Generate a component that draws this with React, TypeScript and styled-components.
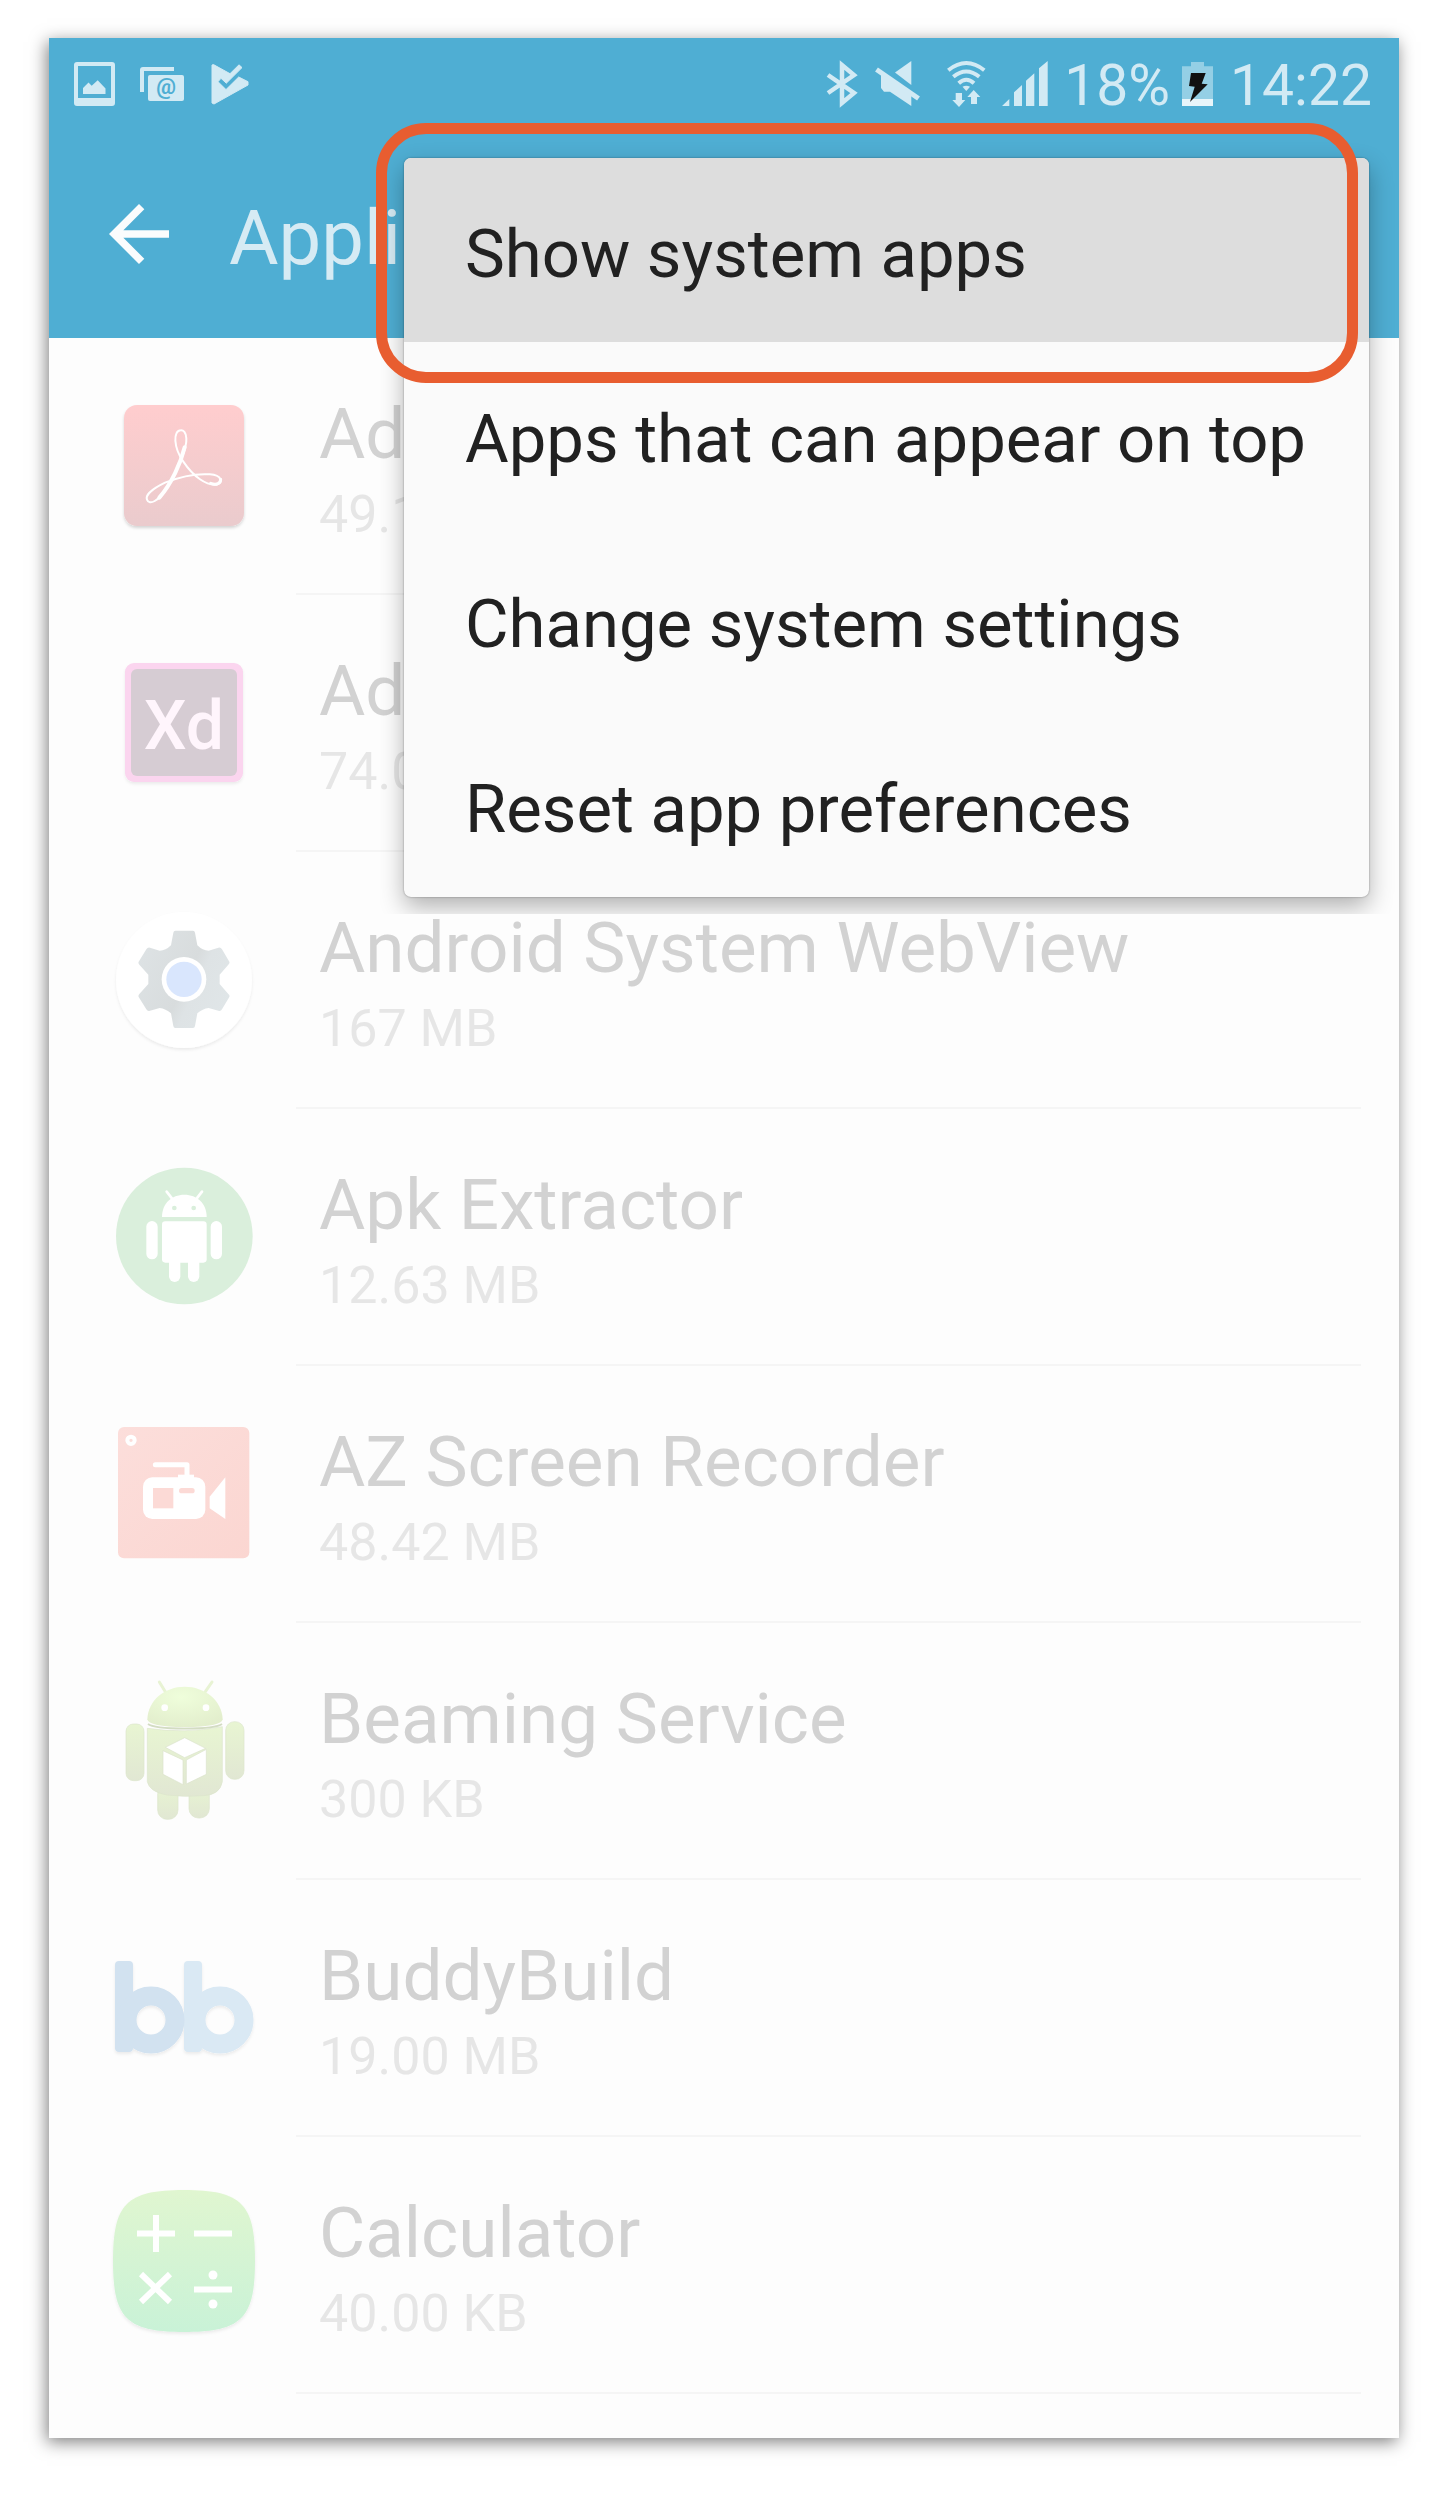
import React from 'react';
import styled, { createGlobalStyle } from 'styled-components';

const GlobalStyle = createGlobalStyle`
  *, *::before, *::after { box-sizing: border-box; }
  body {
    margin: 0;
    background: #fff;
    font-family: Roboto, "Liberation Sans", sans-serif;
  }
  h1, p, ul { margin: 0; padding: 0; font-weight: 400; }
  ul { list-style: none; }
  button { font: inherit; border: 0; background: none; padding: 0; cursor: pointer; }
`;

const Page = styled.main`
  padding: 38px 49px 59px;
`;

const Screen = styled.div`
  position: relative;
  padding-bottom: 44px;
  background: #fdfdfd;
  box-shadow: -2px 4px 16px rgba(0, 0, 0, 0.5);
`;

const Header = styled.header`
  background: #4faed3;
`;

const StatusBar = styled.div`
  display: flex;
  align-items: center;
  justify-content: space-between;
  height: 96px;
  padding: 0 27px 0 24px;
  color: #d2eaf4;
`;

const StatusGroup = styled.div<{ $gap: number }>`
  display: flex;
  align-items: center;
  gap: ${(p) => p.$gap}px;
  white-space: nowrap;
`;

const StatusText = styled.span`
  font-size: 57px;
  line-height: 64px;
`;

const StatusSvg = styled.svg`
  display: block;
  flex: none;
  height: 46px;
  overflow: visible;
  margin-bottom: 4px;
`;

const Toolbar = styled.div`
  display: flex;
  align-items: center;
  gap: 45px;
  height: 204px;
  padding: 0 24px 4px 45px;
`;

const BackButton = styled.button`
  display: flex;
  color: #fafcfd;
`;

const Title = styled.h1`
  padding-top: 8px;
  font-size: 76px;
  line-height: 88px;
  color: #d6ebf4;
  white-space: nowrap;
`;

const Row = styled.li`
  display: flex;
  align-items: stretch;
  gap: 40px;
  padding: 0 38px 0 63px;
`;

const AppIcon = styled.svg`
  display: block;
  flex: none;
  align-self: center;
  width: 144px;
  height: 144px;
  margin-bottom: 3px;
  overflow: visible;
`;

const RowBody = styled.div`
  display: flex;
  flex: 1;
  flex-direction: column;
  justify-content: center;
  gap: 8px;
  min-width: 0;
  height: 257px;
  padding: 6px 0 0 23px;
  border-bottom: 2px solid #f5f5f5;
  white-space: nowrap;
`;

const AppName = styled.p`
  font-size: 71px;
  line-height: 84px;
  color: #d2d2d2;
`;

const AppSize = styled.p`
  font-size: 52px;
  line-height: 62px;
  color: #e6e6e6;
`;

const Menu = styled.div`
  position: absolute;
  top: 120px;
  right: 30px;
  display: flex;
  flex-direction: column;
  gap: 1px;
  border-radius: 7px;
  background: #fafafa;

  &::before {
    content: '';
    position: absolute;
    inset: 0;
    z-index: -1;
    border-radius: 7px;
    box-shadow: 0 0 2px rgba(0, 0, 0, 0.4), 0 10px 24px rgba(0, 0, 0, 0.3);
    clip-path: inset(-24px -30px -17px -24px);
  }
`;

const MenuLayer = styled.div`
  position: absolute;
  inset: 0;
  z-index: 1;
  pointer-events: none;

  > * { pointer-events: auto; z-index: 0; }
`;

const MenuItem = styled.button<{ $active?: boolean }>`
  position: relative;
  height: 184px;
  padding: 8px 63px 0 61px;
  border-radius: ${(p) => (p.$active ? '7px 7px 0 0' : '0')};
  background: ${(p) => (p.$active ? '#ddd' : 'transparent')};
  color: #212121;
  font-size: 67px;
  line-height: 80px;
  text-align: left;
  white-space: nowrap;
`;

const Highlight = styled.span`
  position: absolute;
  inset: -35px 11px -41px -28px;
  border: 11px solid #e85d30;
  border-radius: 50px;
`;

const THIRD = 1 / 3;
const at = (y: number) => `translate(-22 ${-y}) scale(${THIRD})`;

const AcrobatIcon = () => (
  <AppIcon viewBox="0 0 144 144" aria-hidden="true">
    <defs>
      <linearGradient id="acro" x1="0" y1="0" x2="0" y2="1">
        <stop offset="0" stopColor="#ffcdce" />
        <stop offset="1" stopColor="#eacbcd" />
      </linearGradient>
      <filter id="soft" x="-20%" y="-20%" width="140%" height="150%">
        <feDropShadow dx="0" dy="2" stdDeviation="1.5" floodOpacity="0.16" />
      </filter>
      <filter id="faint" x="-20%" y="-20%" width="140%" height="150%">
        <feDropShadow dx="0" dy="2" stdDeviation="1.5" floodOpacity="0.07" />
      </filter>
    </defs>
    <rect x="12" y="12" width="120" height="121" rx="13" fill="url(#acro)" filter="url(#soft)" />
    <g transform={at(33)} fill="none" stroke="#fff" strokeLinecap="round">
      <path strokeWidth="6" d="M272 211C249 212 250 262 280 305C310 350 350 378 380 374C402 370 395 345 360 343C320 340 270 350 225 368C190 385 165 405 171 419C178 438 206 422 230 385C260 335 292 265 289 235C288 217 280 210 272 211Z" />
      <path strokeWidth="12" d="M284 262C272 310 245 370 208 413" />
      <path strokeWidth="9" d="M362 370C380 376 392 370 392 358" />
    </g>
  </AppIcon>
);

const XdIcon = () => (
  <AppIcon viewBox="0 0 144 144" aria-hidden="true">
    <rect x="13" y="13" width="118" height="119" rx="9" fill="#fbd5ef" filter="url(#faint)" />
    <rect x="19" y="19" width="106" height="107" rx="6" fill="#d6ccd3" />
    <text x="72" y="99" fontWeight="500" fontSize="68" textAnchor="middle" fill="#fff5fc">
      Xd
    </text>
  </AppIcon>
);

const WebViewIcon = () => (
  <AppIcon viewBox="0 0 144 144" aria-hidden="true">
    <defs>
      <linearGradient id="gear" x1="0" y1="0.3" x2="1" y2="0.8">
        <stop offset="0" stopColor="#dde2e4" />
        <stop offset="0.5" stopColor="#d8dcdd" />
        <stop offset="0.62" stopColor="#dee3e5" />
        <stop offset="1" stopColor="#e0e6e8" />
      </linearGradient>
    </defs>
    <circle cx="72" cy="73" r="68" fill="#fff" filter="url(#faint)" />
    <g transform={at(27)}>
      <path
        fill="url(#gear)"
        d="M256 152H309Q314 152 315 158L322 196Q338 212 356 212L385 203Q392 201 396 208L418 245Q420 250 415 254L389 284V312L415 342Q420 346 418 351L396 388Q392 395 385 392L356 384Q338 386 322 400L315 438Q314 444 309 444H256Q251 444 250 438L243 400Q227 386 209 384L180 392Q173 395 169 388L146 351Q144 346 148 342L175 312V284L148 254Q144 250 146 245L169 208Q173 201 180 203L209 212Q227 212 243 196L250 158Q251 152 256 152Z"
      />
      <circle cx="282" cy="298" r="67" fill="#fff" />
      <circle cx="282" cy="298" r="53" fill="#d9e6fd" />
    </g>
  </AppIcon>
);

const ApkIcon = () => (
  <AppIcon viewBox="0 0 144 144" aria-hidden="true">
    <g transform={at(284)}>
      <circle cx="283" cy="1068" r="205" fill="#daefdc" />
      <g fill="#fff">
        <path d="M216 1011C216 970 245 944 283 944S350 970 350 1011Z" />
        <rect x="216" y="1024" width="134" height="124" rx="10" />
        <rect x="169" y="1023" width="34" height="115" rx="17" />
        <rect x="362" y="1023" width="34" height="115" rx="17" />
        <rect x="237" y="1120" width="34" height="86" rx="17" />
        <rect x="294" y="1120" width="34" height="86" rx="17" />
      </g>
      <path d="M230 935L248 958M336 935L318 958" stroke="#fff" strokeWidth="8" strokeLinecap="round" />
      <circle cx="253" cy="984" r="7" fill="#daefdc" />
      <circle cx="311" cy="984" r="7" fill="#daefdc" />
    </g>
  </AppIcon>
);

const RecorderIcon = () => (
  <AppIcon viewBox="0 0 144 144" aria-hidden="true">
    <defs>
      <linearGradient id="rec" x1="0" y1="0" x2="1" y2="1">
        <stop offset="0" stopColor="#fcdedb" />
        <stop offset="1" stopColor="#fbd6d1" />
      </linearGradient>
    </defs>
    <g transform={at(41)}>
      <rect x="84" y="141" width="394" height="394" rx="18" fill="url(#rec)" />
      <circle cx="123" cy="181" r="11" fill="none" stroke="#fff" strokeWidth="12" />
      <path d="M196 254H291V290" fill="none" stroke="#fff" strokeWidth="15" strokeLinecap="round" strokeLinejoin="round" />
      <rect x="264" y="284" width="48" height="14" fill="#fff" />
      <rect x="159" y="292" width="187" height="125" rx="28" fill="#fff" />
      <rect x="189" y="324" width="61" height="61" fill="#fcdad6" />
      <rect x="267" y="324" width="47" height="16" rx="8" fill="#fcdad6" />
      <path d="M359 350L406 292V417L359 385Z" fill="#fff" />
    </g>
  </AppIcon>
);

const BeamingIcon = () => (
  <AppIcon viewBox="0 0 144 144" aria-hidden="true">
    <defs>
      <radialGradient id="head" cx="0.45" cy="0.25" r="0.8">
        <stop offset="0" stopColor="#effedb" />
        <stop offset="1" stopColor="#e2edcc" />
      </radialGradient>
      <linearGradient id="limb" x1="0" y1="0" x2="0" y2="1">
        <stop offset="0" stopColor="#e8f5d2" />
        <stop offset="1" stopColor="#e1e7d3" />
      </linearGradient>
    </defs>
    <g transform={at(298)}>
      <path d="M208 906L226 935M366 906L346 935" stroke="#e8f3d4" strokeWidth="9" strokeLinecap="round" />
      <g fill="url(#limb)" stroke="#dde5cc" strokeWidth="2">
        <rect x="203" y="1215" width="61" height="103" rx="28" />
        <rect x="297" y="1215" width="61" height="99" rx="28" />
        <rect x="108" y="1032" width="54" height="170" rx="22" />
        <rect x="407" y="1025" width="55" height="173" rx="26" />
        <path d="M172 1045Q284 1062 397 1040V1205Q390 1245 340 1247Q284 1252 230 1245Q178 1235 172 1205Z" />
      </g>
      <path d="M172 1018C174 960 225 920 284 920S396 960 398 1018Q396 1040 284 1042Q175 1040 172 1018Z" fill="url(#head)" />
      <path d="M174 1032Q190 1045 284 1046Q380 1045 396 1032" fill="none" stroke="#d3dcc3" strokeWidth="5" />
      <circle cx="224" cy="983" r="10" fill="#fff" />
      <circle cx="348" cy="983" r="10" fill="#fff" />
      <g fill="#fff" stroke="#dbe3cb" strokeWidth="2">
        <path d="M284 1073L347 1105L284 1133L226 1102Z" />
        <path d="M219 1112L279 1140V1214L219 1183Z" />
        <path d="M289 1140L349 1108V1183L289 1212Z" />
      </g>
    </g>
  </AppIcon>
);

const BuddyIcon = () => (
  <AppIcon viewBox="0 0 144 144" aria-hidden="true">
    <g filter="url(#faint)">
      <rect x="72" y="26" width="18" height="91" rx="4" fill="#dae9f4" />
      <circle cx="108" cy="85" r="24" fill="none" stroke="#dae9f4" strokeWidth="19" />
      <rect x="3" y="26" width="18" height="91" rx="4" fill="#d2e2f0" />
      <circle cx="39" cy="85" r="24" fill="none" stroke="#d2e2f0" strokeWidth="19" />
    </g>
  </AppIcon>
);

const CalculatorIcon = () => (
  <AppIcon viewBox="0 0 144 144" aria-hidden="true">
    <defs>
      <linearGradient id="calc" x1="0" y1="0" x2="0" y2="1">
        <stop offset="0" stopColor="#e0f6d0" />
        <stop offset="1" stopColor="#c9f2d7" />
      </linearGradient>
    </defs>
    <path d="M72 -2C130 -2 143 12 143 69S130 140 72 140S1 126 1 69S14 -2 72 -2Z" fill="url(#calc)" filter="url(#faint)" />
    <g stroke="#fff" strokeWidth="6" fill="none">
      <path d="M25 41.5H63M44 23V60M82 41.5H120M82 97.5H120M29 82L58 110M58 82L29 110" />
    </g>
    <circle cx="101" cy="83" r="4.5" fill="#fff" />
    <circle cx="101" cy="112" r="4.5" fill="#fff" />
  </AppIcon>
);

const apps = [
  { name: 'Adobe Acrobat', size: '49.15 MB', Icon: AcrobatIcon },
  { name: 'Adobe XD', size: '74.02 MB', Icon: XdIcon },
  { name: 'Android System WebView', size: '167 MB', Icon: WebViewIcon },
  { name: 'Apk Extractor', size: '12.63 MB', Icon: ApkIcon },
  { name: 'AZ Screen Recorder', size: '48.42 MB', Icon: RecorderIcon },
  { name: 'Beaming Service', size: '300 KB', Icon: BeamingIcon },
  { name: 'BuddyBuild', size: '19.00 MB', Icon: BuddyIcon },
  { name: 'Calculator', size: '40.00 KB', Icon: CalculatorIcon },
];

const menuItems = [
  'Show system apps',
  'Apps that can appear on top',
  'Change system settings',
  'Reset app preferences',
];

const Notifications = () => (
  <StatusGroup $gap={24}>
    <StatusSvg width="42" viewBox="0 0 42 46" fill="currentColor" aria-hidden="true">
      <path fillRule="evenodd" d="M4 1H39Q42 1 42 4V42Q42 45 39 45H4Q1 45 1 42V4Q1 1 4 1ZM5 5V37H38V5Z" />
      <path d="M10 33V27L15.5 21.5L18.7 24.7L24.7 19.3L32.5 27.5V33Z" />
    </StatusSvg>
    <StatusSvg width="48" viewBox="0 0 48 46" fill="currentColor" aria-hidden="true">
      <path d="M1 31V9Q1 6 4 6H35V10H5V31Z" />
      <rect x="9" y="14" width="36" height="26" rx="2" />
      <text x="27" y="33" textAnchor="middle" fontSize="22" fontWeight="700" fill="#4faed3">@</text>
    </StatusSvg>
    <StatusSvg width="38" viewBox="0 0 38 46" fill="currentColor" stroke="currentColor" strokeLinejoin="round" aria-hidden="true">
      <path d="M1 4L2.5 3.6L19 12.7L28 3.8L31 6.6L15.3 22.2L10 17.3L7 20.7L15 28.6L27.7 16L37 20.7V24L3 43L1 42Z" />
    </StatusSvg>
  </StatusGroup>
);

const SystemStatus = () => (
  <StatusGroup $gap={12}>
    <StatusSvg width="36" viewBox="0 0 36 46" fill="none" stroke="currentColor" strokeWidth="4.5" aria-hidden="true">
      <path d="M2 14L28 32L16 42V4L28 14L2 32" />
    </StatusSvg>
    <StatusSvg width="60" viewBox="0 0 60 46" fill="currentColor" aria-hidden="true">
      <path d="M21 11.5L37.3 0V24Z" />
      <path d="M7 11V27L10 30.7H16L37.3 45V33Z" />
      <path d="M2.5 8.5L44.5 37.5" stroke="currentColor" strokeWidth="5" />
    </StatusSvg>
    <StatusSvg width="43" viewBox="0 0 43 46" fill="currentColor" aria-hidden="true">
      <path
        d="M2.3 9.2Q20.3 -5.2 38.3 9.2M7.3 15.8Q20.3 5.3 33.3 15.8M12.7 22.2Q20.3 15.3 28 22.2"
        fill="none"
        stroke="currentColor"
        strokeWidth="4"
      />
      <path d="M16.5 25.8Q20.3 23.5 24 25.8L20.3 30Z" />
      <path d="M9.7 32H16V39H19.3L13 46L6.3 39H9.7Z" />
      <path d="M25 43V36H21.3L27.7 29L34.3 36H31V43Z" />
    </StatusSvg>
    <StatusSvg width="51" viewBox="0 0 51 46" fill="currentColor" aria-hidden="true">
      <path d="M1 45H8.3V38ZM13 45V31.3L21 24V45ZM25 45V19.7L33.3 12.3V45ZM38 45V7.3L46.7 0V45Z" />
    </StatusSvg>
    <StatusText>18%</StatusText>
    <StatusSvg width="36" viewBox="0 0 36 46" fill="currentColor" aria-hidden="true">
      <path d="M0 5.3H9V1H22V5.3H31V38H0Z" fill="#94cfe5" />
      <rect y="38" width="31" height="7" fill="#e8f5fa" />
      <path d="M9 12H23.7L19.7 22.7L25.7 23.3L8 41L12.7 25.7L7 25Z" fill="#111" />
    </StatusSvg>
    <StatusText>14:22</StatusText>
  </StatusGroup>
);

export default function App() {
  return (
    <>
      <GlobalStyle />
      <Page>
        <Screen>
          <Header>
            <StatusBar>
              <Notifications />
              <SystemStatus />
            </StatusBar>
            <Toolbar>
              <BackButton type="button" aria-label="Back">
                <svg width="90" height="90" viewBox="0 0 24 24" fill="currentColor" aria-hidden="true">
                  <path d="M20 11H7.83l5.59-5.59L12 4l-8 8 8 8 1.41-1.41L7.83 13H20v-2z" />
                </svg>
              </BackButton>
              <Title>Application manager</Title>
            </Toolbar>
          </Header>
          <ul>
            {apps.map(({ name, size, Icon }) => (
              <Row key={name}>
                <Icon />
                <RowBody>
                  <AppName>{name}</AppName>
                  <AppSize>{size}</AppSize>
                </RowBody>
              </Row>
            ))}
          </ul>
          <MenuLayer>
            <Menu role="menu" aria-label="More options">
              {menuItems.map((label, i) => (
                <MenuItem key={label} type="button" role="menuitem" $active={i === 0}>
                  {label}
                  {i === 0 && <Highlight />}
                </MenuItem>
              ))}
            </Menu>
          </MenuLayer>
        </Screen>
      </Page>
    </>
  );
}
